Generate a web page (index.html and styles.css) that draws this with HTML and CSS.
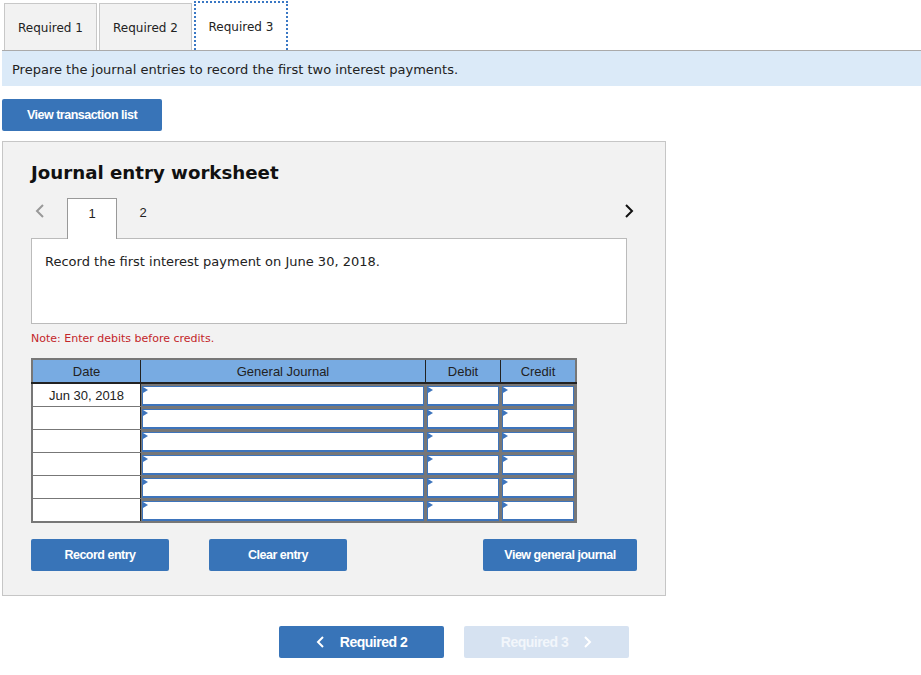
FILE: index.html
```html
<!DOCTYPE html>
<html lang="en">
<head>
    <meta charset="UTF-8">
    <title>Journal entry worksheet</title>
    <link rel="stylesheet" href="styles.css">
</head>
<body>

    <div class="tabs">
        <div class="tab">Required 1</div>
        <div class="tab">Required 2</div>
        <div class="tab active">Required 3</div>
    </div>

    <div class="prompt">Prepare the journal entries to record the first two interest payments.</div>

    <button class="btn btn-list">View transaction list</button>

    <div class="worksheet">
        <h2>Journal entry worksheet</h2>

        <div class="pager">
            <span class="arrow arrow-left">
                <svg width="12" height="16" viewBox="0 0 12 16"><path d="M9 2 L3 8 L9 14" fill="none" stroke="#999" stroke-width="2"/></svg>
            </span>
            <div class="page current">1</div>
            <div class="page">2</div>
            <span class="arrow arrow-right">
                <svg width="12" height="16" viewBox="0 0 12 16"><path d="M3 2 L9 8 L3 14" fill="none" stroke="#111" stroke-width="2"/></svg>
            </span>
        </div>

        <div class="desc">Record the first interest payment on June 30, 2018.</div>

        <p class="note">Note: Enter debits before credits.</p>

        <table class="journal">
            <thead>
                <tr>
                    <th class="col-date">Date</th>
                    <th class="col-acct">General Journal</th>
                    <th class="col-amt">Debit</th>
                    <th class="col-amt">Credit</th>
                </tr>
            </thead>
            <tbody>
                <tr>
                    <td class="date">Jun 30, 2018</td>
                    <td class="field"><div class="input"></div></td>
                    <td class="field"><div class="input"></div></td>
                    <td class="field"><div class="input"></div></td>
                </tr>
                <tr>
                    <td class="date"></td>
                    <td class="field"><div class="input"></div></td>
                    <td class="field"><div class="input"></div></td>
                    <td class="field"><div class="input"></div></td>
                </tr>
                <tr>
                    <td class="date"></td>
                    <td class="field"><div class="input"></div></td>
                    <td class="field"><div class="input"></div></td>
                    <td class="field"><div class="input"></div></td>
                </tr>
                <tr>
                    <td class="date"></td>
                    <td class="field"><div class="input"></div></td>
                    <td class="field"><div class="input"></div></td>
                    <td class="field"><div class="input"></div></td>
                </tr>
                <tr>
                    <td class="date"></td>
                    <td class="field"><div class="input"></div></td>
                    <td class="field"><div class="input"></div></td>
                    <td class="field"><div class="input"></div></td>
                </tr>
                <tr>
                    <td class="date"></td>
                    <td class="field"><div class="input"></div></td>
                    <td class="field"><div class="input"></div></td>
                    <td class="field"><div class="input"></div></td>
                </tr>
            </tbody>
        </table>

        <div class="actions">
            <button class="btn btn-record">Record entry</button>
            <button class="btn btn-clear">Clear entry</button>
            <button class="btn btn-view">View general journal</button>
        </div>
    </div>

    <div class="nav">
        <button class="btn btn-nav">
            <svg width="10" height="12" viewBox="0 0 10 12"><path d="M7 1 L2 6 L7 11" fill="none" stroke="#fff" stroke-width="2"/></svg>
            Required 2
        </button>
        <button class="btn btn-nav disabled">
            Required 3
            <svg width="10" height="12" viewBox="0 0 10 12"><path d="M3 1 L8 6 L3 11" fill="none" stroke="#fff" stroke-width="2"/></svg>
        </button>
    </div>

</body>
</html>
```

FILE: styles.css
```css
body {
    margin: 0;
    padding: 3px 0 0 2px;
    font-family: "DejaVu Sans", Verdana, sans-serif;
    color: #222;
    background-color: white;
}

/* Top tabs */
.tabs {
    display: flex;
    gap: 2px;
    padding-left: 2px;
    border-bottom: 1px solid #aaa;
}

.tab {
    width: 91px;
    height: 46px;
    line-height: 48px;
    text-align: center;
    font-size: 12px;
    background-color: #f2f2f2;
    border: 1px solid #c8c8c8;
    border-bottom: none;
    box-sizing: content-box;
}

.tab.active {
    background-color: white;
    border: 2px dotted #3a78c4;
    border-bottom: none;
    width: 90px;
    height: 46px;
    margin-top: -2px;
    margin-bottom: -1px;
    padding-bottom: 1px;
}

.prompt {
    background-color: #dbeaf8;
    font-size: 13px;
    padding: 0 10px;
    height: 35px;
    line-height: 37px;
}

/* Buttons */
.btn {
    font-family: "Liberation Sans", Arial, sans-serif;
    font-weight: bold;
    font-size: 12.5px;
    letter-spacing: -0.5px;
    color: white;
    background-color: #3874b8;
    border: none;
    border-radius: 2px;
    height: 32px;
    cursor: pointer;
}

.btn-list {
    width: 160px;
    margin-top: 13px;
    display: block;
}

/* Worksheet panel */
.worksheet {
    width: 664px;
    height: 455px;
    margin-top: 10px;
    background-color: #f2f2f2;
    border: 1px solid #c6c6c6;
    padding: 0 0 0 28px;
    box-sizing: border-box;
}

.worksheet h2 {
    margin: 20px 0 0 0;
    font-size: 18.2px;
    font-weight: bold;
    color: #111;
}

.pager {
    display: flex;
    align-items: flex-end;
    margin-top: 14px;
    height: 41px;
    width: 596px;
}

.arrow {
    display: flex;
    height: 28px;
    align-items: center;
    align-self: flex-start;
}

.arrow-left {
    margin-left: 3px;
    width: 33px;
}

.arrow-right {
    margin-left: auto;
    margin-right: -8px;
}

.page {
    width: 48px;
    height: 40px;
    line-height: 30px;
    text-align: center;
    font-size: 13px;
    font-family: "Liberation Sans", Arial, sans-serif;
    color: #222;
}

.page.current {
    background-color: white;
    border: 1px solid #999;
    border-bottom: none;
    margin-bottom: -1px;
    position: relative;
    z-index: 1;
}

.page + .page {
    margin-left: 2px;
}

.desc {
    background-color: white;
    border: 1px solid #bbb;
    width: 596px;
    height: 86px;
    box-sizing: border-box;
    font-size: 13px;
    padding: 15px 13px;
    color: #222;
}

.note {
    color: #c3262a;
    font-size: 11px;
    margin: 8px 0 0 0;
}

/* Journal table */
.journal {
    margin-top: 13px;
    border-collapse: collapse;
    font-family: "Liberation Sans", Arial, sans-serif;
    font-size: 13px;
    border: 2px solid #777;
}

.journal th {
    background-color: #78abe2;
    font-weight: normal;
    color: #222;
    height: 22px;
    padding: 0;
    border-right: 1px solid #222;
    border-bottom: 2px solid #222;
}

.journal th:last-child {
    border-right: none;
}

.col-date { width: 107px; }
.col-acct { width: 284px; }
.col-amt { width: 74px; }

.journal td {
    height: 21px;
    padding: 0;
    border: 1px solid #777;
}

.journal td.date {
    text-align: center;
    color: #222;
    background-color: white;
    border-right: 1px solid #222;
}

.journal td.field {
    background-color: #777;
    padding: 1px 1px 0 1px;
}

.input {
    height: 17px;
    background-color: white;
    border: 1px solid #3d74bc;
    border-bottom-width: 2px;
    position: relative;
}

.input::before {
    content: "";
    position: absolute;
    top: 0;
    left: 0;
    border-left: 5px solid #3d74bc;
    border-top: 3px solid transparent;
    border-bottom: 3px solid transparent;
}

.actions {
    display: flex;
    margin-top: 16px;
    width: 606px;
}

.btn-record,
.btn-clear {
    width: 138px;
}

.btn-clear {
    margin-left: 40px;
}

.btn-view {
    width: 154px;
    margin-left: auto;
}

/* Bottom navigation */
.nav {
    display: flex;
    gap: 20px;
    margin: 30px 0 0 277px;
}

.btn-nav {
    width: 165px;
    font-size: 14px;
    display: flex;
    align-items: center;
    justify-content: center;
    gap: 14px;
}

.btn-nav.disabled {
    background-color: #d6e2f1;
    color: #f2f6fb;
    cursor: default;
}
```
